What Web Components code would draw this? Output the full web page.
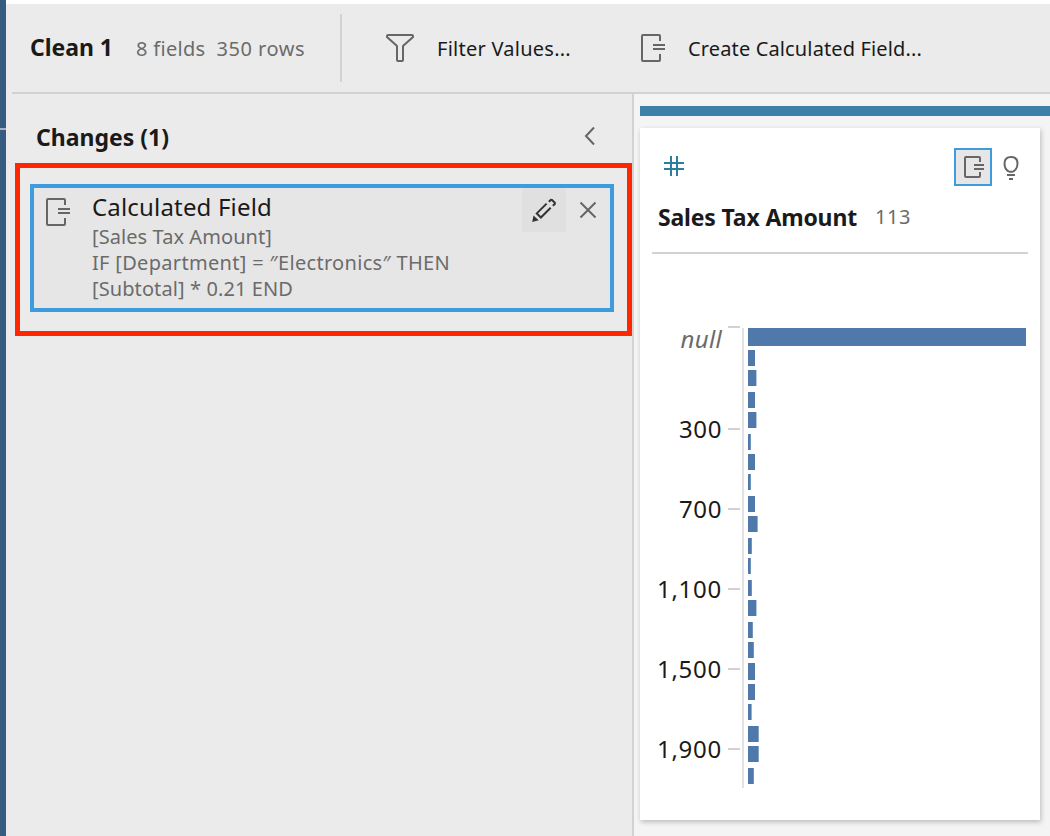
<!DOCTYPE html>
<html lang="en">
<head>
<meta charset="utf-8">
<title>Clean 1</title>
<style>
html,body{margin:0;height:100%;overflow:hidden;background:#f4f4f4;font-family:"Noto Sans","Open Sans",sans-serif;color:#1a1a1a}
</style>
</head>
<body>
<prep-app></prep-app>
<script>
const define = (name, html, setup) => {
  const t = document.createElement('template');
  t.innerHTML = html;
  customElements.define(name, class extends HTMLElement {
    constructor() {
      super();
      this.attachShadow({mode: 'open'}).append(t.content.cloneNode(true));
    }
    connectedCallback() { if (setup) setup(this, this.shadowRoot); }
  });
};

/* Single line label; "fit" spreads the tracking over a fixed advance width. */
define('ui-label', `<style>
:host{display:block;white-space:pre;font-size:20px;line-height:26px}
:host([bold]){font-weight:700;font-size:23px}
:host([large]){font-size:24px}
:host([muted]){color:#6b6b6b}
:host([italic]){font-style:italic}
span{display:inline-block}
</style><span><slot></slot></span>`, (el, root) => {
  const fit = +el.getAttribute('fit');
  if (!fit) return;
  const span = root.querySelector('span');
  const n = el.textContent.length;
  span.style.letterSpacing = (fit - span.getBoundingClientRect().width) / n + 'px';
});

const icons = {
  calc: ['0 0 26 30', '<path d="M20 8V3Q20 2 19 2H3Q2 2 2 3V27Q2 28 3 28H19Q20 28 20 27V21M13 12H25M13 16H25"/>'],
  calcSmall: ['0 0 22 24', '<path d="M16 7V3Q16 2 15 2H2Q1 2 1 3V21Q1 22 2 22H15Q16 22 16 21V17M10 10H20M10 14H20"/>'],
  filter: ['0 0 30 30', '<path d="M3 2H27Q28 2 28 3V4L18 13V27Q18 28 17 28H13Q12 28 12 27V13L2 4V3Q2 2 3 2Z"/>'],
  back: ['0 0 12 20', '<path d="M10 1.500L2 10L10 18.500"/>'],
  close: ['0 0 18 18', '<path d="M1.500 1.500L16.500 16.500M16.500 1.500L1.500 16.500"/>'],
  hash: ['0 0 20 20', '<path d="M7 0V20M13 0V20M0 7H20M0 13H20"/>'],
  bulb: ['0 0 16 26', '<path d="M5.500 16.400C2.500 14.500 1.500 11.500 1.500 8.500C1.500 4 4 2 8 2S14.500 4 14.500 8.500C14.500 11.500 13.500 14.500 10.500 16.400Q8 17.300 5.500 16.400ZM4 20H12M6 24H10"/>'],
  pencil: ['0 0 24 24', '<path d="M14.600 5.600L4.800 15.400L8.900 19.500L18.700 9.700M16.800 3.800L18.900 1.900L20 2L22.800 4.700V6L20.800 7.800"/><path d="M1.500 17.500L6.700 22.300L.2 24Z" style="fill:currentColor;stroke:none"/>']
};
define('ui-icon', `<style>:host{display:block;flex:none;color:#666}
svg{display:block;fill:none;stroke:currentColor;stroke-width:2}</style>
<svg></svg>`, (el, root) => {
  const [box, body] = icons[el.getAttribute('name')];
  const svg = root.querySelector('svg'), [, , w, h] = box.split(' ');
  svg.setAttribute('viewBox', box);
  svg.setAttribute('width', w);
  svg.setAttribute('height', h);
  svg.innerHTML = body;
});

define('flow-rail', `<style>:host{display:block;background:#375a80;padding-top:128px;box-sizing:border-box}
i{display:block;height:2px;background:#a8b3c2}</style><i></i>`);

define('step-toolbar', `<style>
:host{display:flex;align-items:center;box-sizing:border-box;height:90px;margin-left:6px;padding:0 0 0 18px;border-bottom:2px solid #d2d2d2}
ui-label{margin-top:2px}
.name{margin-top:-2px}
.fields{margin-left:23px}.rows{margin-left:11px}
hr{width:2px;height:68px;margin:0 0 0 35px;border:0;background:#d2d2d2}
.filter{margin-left:43px}.filter+ui-label{margin-left:22px}
.calc{margin-left:69px}.calc+ui-label{margin-left:22px}
</style>
<ui-label class="name" bold fit="83">Clean 1</ui-label>
<ui-label class="fields" muted fit="69.5">8 fields</ui-label>
<ui-label class="rows" muted fit="88.5">350 rows</ui-label>
<hr><ui-icon class="filter" name="filter"></ui-icon><ui-label fit="134">Filter Values...</ui-label>
<ui-icon class="calc" name="calc"></ui-icon><ui-label fit="234">Create Calculated Field...</ui-label>`);

define('change-card', `<style>
:host{display:flex;box-sizing:border-box;height:128px;border:4px solid #3e9cde;background:#e6e6e6}
.calc{margin:9px 0 0 11px}
.text{flex:1;margin:6px 0 0 21px}
.head{margin-bottom:4px}
.edit{box-sizing:border-box;width:44px;height:44px;padding:10px 10px;background:#e0e0e0}
.edit ui-icon{color:#333}
.close{margin:13px 13px 0 13px}
</style>
<ui-icon class="calc" name="calc"></ui-icon>
<div class="text"><ui-label class="head" large fit="180">Calculated Field</ui-label>
<ui-label muted fit="180">[Sales Tax Amount]</ui-label>
<ui-label muted fit="358">IF [Department] = ″Electronics″ THEN</ui-label>
<ui-label muted fit="201">[Subtotal] * 0.21 END</ui-label></div>
<div class="edit"><ui-icon name="pencil"></ui-icon></div>
<ui-icon class="close" name="close"></ui-icon>`);

define('changes-pane', `<style>
:host{display:block;border-right:2px solid #d2d2d2}
header{display:flex;justify-content:space-between;align-items:center;height:69px;padding:14px 36px 0 30px;box-sizing:border-box}
header ui-label{margin-top:2px}
.mark{margin-left:9px;border:5px solid #ff2600;padding:16px 13px 19px 10px}
</style>
<header><ui-label bold fit="133">Changes (1)</ui-label><ui-icon name="back"></ui-icon></header>
<div class="mark"><change-card></change-card></div>`);

define('value-histogram', `<style>
:host{display:grid;grid-template-columns:82px 6px 1fr}
.labels{display:flex;flex-direction:column;align-items:flex-end}
.labels ui-label{height:80px}
.labels ui-label:first-child{height:90px}
svg{display:block}
</style>
<div class="labels"></div><span></span><svg width="300" height="464"></svg>`, (el, root) => {
  const bars = [[328,278,18],[350,7],[370,8.4],[392,7],[412,8.4],[434,2.8],[454,7],[474,2.8],[496,7],[516,9.6],[538,3.8],[558,2.8],[580,3.8],[600,8.4],[622,4.8],[642,5.8],[663,7,17],[684,7],[704,3.6],[726,10.7],[746,10.7],[768,5.8]];
  root.querySelector('.labels').innerHTML =
    '<ui-label large muted italic fit="41.5">null</ui-label>' +
    ['300', '700', '1,100', '1,500', '1,900'].map(v => `<ui-label large fit="${v.length > 3 ? 65 : 43}">${v}</ui-label>`).join('');
  const svg = root.querySelector('svg');
  svg.setAttribute('viewBox', '728 326 300 464');
  svg.innerHTML =
    [326, 428, 508, 588, 668, 748].map(y => `<rect x="728" y="${y}" width="12" height="2" fill="#d2d2d2"/>`).join('') +
    '<rect x="742" y="328" width="2" height="460" fill="#e2e2e2"/>' +
    bars.map(([y, w, h = 16]) => `<rect x="748" y="${y}" width="${w}" height="${h}" fill="#4e79aa"/>`).join('');
});

define('profile-card', `<style>
:host{display:block;box-sizing:border-box;width:400px;height:692px;background:#fff;box-shadow:1px 2px 5px rgba(0,0,0,.24);padding:20px 12px 0}
.tools{display:flex;align-items:center;height:38px}
.hash{color:#2f7d9c;margin:-2px 0 0 12px}
.sel{box-sizing:border-box;width:38px;height:38px;border:2px solid #3e9cde;background:#e6e6e6;padding:5px 8px;margin-left:auto}
.bulb{margin:2px 9px 0 11px}
.title{display:flex;align-items:center;height:68px;box-sizing:border-box;padding:0 0 4px 6px;border-bottom:2px solid #d2d2d2}
.count{margin:0 0 0 18px}
value-histogram{margin:72px 0 0 -12px}
</style>
<div class="tools"><ui-icon class="hash" name="hash"></ui-icon><div class="sel"><ui-icon name="calcSmall"></ui-icon></div><ui-icon class="bulb" name="bulb"></ui-icon></div>
<div class="title"><ui-label bold fit="199">Sales Tax Amount</ui-label><ui-label class="count" muted fit="36">113</ui-label></div>
<value-histogram></value-histogram>`);

define('profile-pane', `<style>
:host{display:block;overflow:hidden;background:#f4f4f4;padding:12px 0 0 6px}
.band{height:10px;background:#3d80a8;margin-bottom:12px}
</style><div class="band"></div><profile-card></profile-card>`);

define('prep-app', `<style>
:host{display:grid;grid-template-columns:6px 1fr;height:836px}
main{display:grid;grid-template-rows:90px 1fr;margin-top:4px;background:#ebebeb;box-shadow:0 -4px #fff}
.body{display:grid;grid-template-columns:628px 1fr}
</style>
<flow-rail></flow-rail>
<main><step-toolbar></step-toolbar><div class="body"><changes-pane></changes-pane><profile-pane></profile-pane></div></main>`);
</script>
</body>
</html>
